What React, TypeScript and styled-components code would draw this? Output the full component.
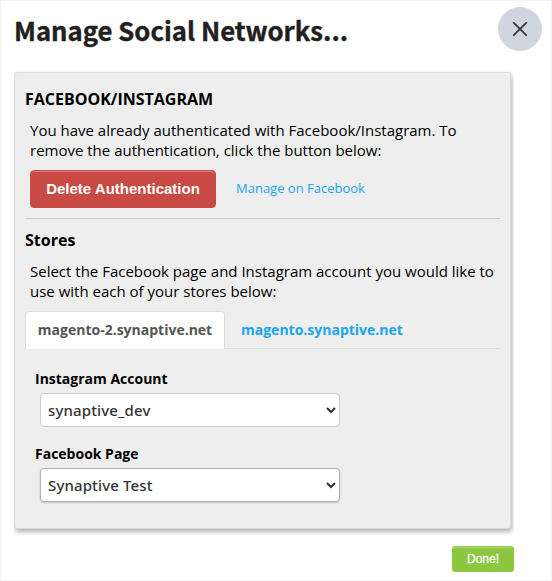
import React from "react";
import styled, { createGlobalStyle } from "styled-components";

const GlobalStyle = createGlobalStyle`
  *, *::before, *::after { box-sizing: border-box; }
  body { margin: 0; background: #fff; font-family: "Open Sans", sans-serif; color: #000; }
  h1, h2, p { margin: 0; }
`;

const Dialog = styled.div`
  width: 552px;
  height: 581px;
  border: 1px solid #f4f4f4;
  background: #fff;
  padding: 0 9px 0 13px;
`;

const Header = styled.header`
  display: flex;
  justify-content: space-between;
  height: 65px;
`;

const Title = styled.h1`
  font: 700 25.7px/40px "Noto Sans CJK JP", "Noto Sans", sans-serif;
  color: #231f20;
  -webkit-text-stroke: 0.4px #231f20;
  white-space: nowrap;
  padding-top: 9px;
`;

const CloseButton = styled.button`
  display: flex;
  align-items: center;
  justify-content: center;
  width: 44px;
  height: 44px;
  margin-top: 6px;
  padding: 0;
  border: 0;
  border-radius: 50%;
  background: #cfd6df;
`;

const PanelClip = styled.div`
  width: 500px;
  height: 474px;
  padding-top: 6px;
  overflow: hidden;
`;

const Panel = styled.section`
  display: flex;
  flex-direction: column;
  width: 497px;
  height: 457px;
  padding: 0 10px;
  border: 1px solid #d9d9d9;
  border-radius: 3px;
  background: #eee;
  box-shadow: 1px 3px 5px rgba(0, 0, 0, 0.3);
`;

const SectionTitle = styled.h2<{ $top: number }>`
  margin-top: ${(p) => p.$top}px;
  font-size: 16px;
  font-weight: 700;
  line-height: 20px;
`;

const Description = styled.p`
  margin: 11px 0 0 5px;
  font-size: 15px;
  line-height: 20px;
  white-space: nowrap;
`;

const Actions = styled.div`
  display: flex;
  align-items: center;
  gap: 20px;
  margin: 10px 0 0 5px;
`;

const DeleteButton = styled.button`
  width: 186px;
  height: 38px;
  padding: 0;
  border: 1px solid #c64a42;
  border-radius: 4px;
  background: #c94a44;
  box-shadow: inset 0 1px 0 #dc8480;
  color: #fff;
  font: 700 15px/20px "Liberation Sans", Arial, sans-serif;
`;

const TextLink = styled.a`
  margin-bottom: 2px;
  color: #1ba5ec;
  font-size: 13px;
  line-height: 20px;
  text-decoration: none;
`;

const Divider = styled.div`
  height: 1px;
  margin-top: 10px;
  background: #ccc;
`;

const Tabs = styled.div`
  display: flex;
  height: 38px;
  margin-top: 10px;
  box-shadow: inset 0 -1px 0 #ddd;
`;

const Tab = styled.button<{ $active?: boolean }>`
  height: 38px;
  width: ${(p) => (p.$active ? "200px" : "auto")};
  padding: 0 ${(p) => (p.$active ? 0 : 15)}px 2px;
  border: 1px solid ${(p) => (p.$active ? "#ddd" : "transparent")};
  border-bottom: 0;
  border-radius: 4px 4px 0 0;
  background: ${(p) => (p.$active ? "#fff" : "transparent")};
  color: ${(p) => (p.$active ? "#555" : "#1ba5ec")};
  font: 700 14px/20px "Open Sans", sans-serif;
`;

const Field = styled.label<{ $top: number }>`
  display: flex;
  flex-direction: column;
  margin: ${(p) => p.$top}px 0 0 10px;
  font-size: 14px;
  font-weight: 700;
  line-height: 20px;
`;

const Select = styled.select<{ $raised?: boolean }>`
  width: 300px;
  height: 34px;
  margin: 4px 0 0 5px;
  padding: 0 4px 0 3px;
  border: 1px solid ${(p) => (p.$raised ? "#b3b3b3" : "#ccc")};
  border-radius: 4px;
  background: #fff;
  box-shadow: ${(p) => (p.$raised ? "0 1px 2px rgba(0, 0, 0, 0.18)" : "none")};
  color: #333;
  font: 500 15px/20px "Noto Sans", "Open Sans", sans-serif;
  letter-spacing: 0.13px;
`;

const Footer = styled.footer`
  display: flex;
  width: 500px;
  justify-content: flex-end;
  margin-top: 6px;
`;

const DoneButton = styled.button`
  width: 62px;
  height: 26px;
  padding: 0 0 1px;
  border: 1px solid #8dc73f;
  border-radius: 3px;
  background: #8dc73f;
  box-shadow: inset 0 1px 0 #afd878;
  color: #fff;
  font: 400 12px/18px "Liberation Sans", Arial, sans-serif;
  -webkit-text-stroke: 0.3px #fff;
`;

export default function App() {
  return (
    <>
      <GlobalStyle />
      <Dialog>
        <Header>
          <Title>Manage Social Networks...</Title>
          <CloseButton aria-label="Close">
            <svg width="16" height="16" viewBox="0 0 16 16" fill="none" stroke="#343a40" strokeWidth="1.8" strokeLinecap="round">
              <path d="M1.8 1.8l12.4 12.4M14.2 1.8L1.8 14.2" />
            </svg>
          </CloseButton>
        </Header>
        <PanelClip>
          <Panel>
            <SectionTitle $top={16}>FACEBOOK/INSTAGRAM</SectionTitle>
            <Description>
              You have already authenticated with Facebook/Instagram. To
              <br />
              remove the authentication, click the button below:
            </Description>
            <Actions>
              <DeleteButton>Delete Authentication</DeleteButton>
              <TextLink>Manage on Facebook</TextLink>
            </Actions>
            <Divider />
            <SectionTitle $top={11}>Stores</SectionTitle>
            <Description>
              Select the Facebook page and Instagram account you would like to
              <br />
              use with each of your stores below:
            </Description>
            <Tabs>
              <Tab $active>magento-2.synaptive.net</Tab>
              <Tab>magento.synaptive.net</Tab>
            </Tabs>
            <Field $top={20}>
              Instagram Account
              <Select>
                <option>synaptive_dev</option>
              </Select>
            </Field>
            <Field $top={17}>
              Facebook Page
              <Select $raised>
                <option>Synaptive Test</option>
              </Select>
            </Field>
          </Panel>
        </PanelClip>
        <Footer>
          <DoneButton>Done!</DoneButton>
        </Footer>
      </Dialog>
    </>
  );
}
